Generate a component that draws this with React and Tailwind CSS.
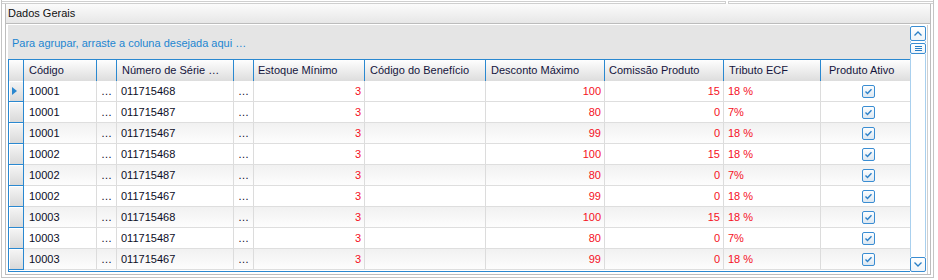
import React from 'react';

const rows = [
  ['10001', '011715468', '3', '100', '15', '18 %'],
  ['10001', '011715487', '3', '80', '0', '7%'],
  ['10001', '011715467', '3', '99', '0', '18 %'],
  ['10002', '011715468', '3', '100', '15', '18 %'],
  ['10002', '011715487', '3', '80', '0', '7%'],
  ['10002', '011715467', '3', '99', '0', '18 %'],
  ['10003', '011715468', '3', '100', '15', '18 %'],
  ['10003', '011715487', '3', '80', '0', '7%'],
  ['10003', '011715467', '3', '99', '0', '18 %'],
];

function CheckBox() {
  return (
    <svg width="13" height="13" viewBox="0 0 13 13">
      <defs>
        <linearGradient id="cbg" x1="0" y1="0" x2="0" y2="1">
          <stop offset="0" stopColor="#ffffff" />
          <stop offset="1" stopColor="#dbe6f0" />
        </linearGradient>
      </defs>
      <rect x="0.5" y="0.5" width="12" height="12" rx="1.5" fill="url(#cbg)" stroke="#3a8dd2" />
      <polyline points="3.5,6.5 5.5,8.5 9.5,4.2" fill="none" stroke="#2c80c8" strokeWidth="1.4" />
    </svg>
  );
}

function ScrollButton({ children, className }) {
  return (
    <div className={`flex items-center justify-center rounded-[2px] border border-[#3a8dd2] bg-gradient-to-b from-white to-[#eef4f9] ${className}`}>
      {children}
    </div>
  );
}

export default function App() {
  const headCell = 'flex items-center h-full border-r border-[#2a88d0] bg-gradient-to-b from-[#fefefe] to-[#dddddd] text-[#14143c]';
  const cell = 'flex items-center h-full border-r border-[#dcdcdc]';

  return (
    <div className="w-[938px] h-[280px] bg-white pl-[1px] overflow-hidden font-['Liberation_Sans',Arial,sans-serif] text-[11px] leading-none">
      <div className="w-[933px] h-[278px] border-l border-r border-b border-[#c4c4c4] flex flex-col">
        {/* top tab edges */}
        <div className="h-[4px] flex">
          <div className="w-[724px] mt-[1px] h-[3px] border-t border-b border-[#cfcfcf] border-r" />
          <div className="flex-1 mt-[1px] h-[3px] border-t border-b border-[#cfcfcf] border-l ml-[2px]" />
        </div>

        <div className="ml-[3px] w-[926px] h-[271px] border-l border-r border-b border-[#bdbdbd] flex flex-col">
          {/* panel caption */}
          <div className="h-[20px] border-b border-[#bcbcbc] bg-gradient-to-b from-[#fbfbfb] to-[#e7e7e7] flex items-center pl-[2px] text-[#111]">
            Dados Gerais
          </div>

          <div className="flex-1 flex pl-[2px] pt-[1px]">
            <div className="w-[902px] flex flex-col">
              {/* group panel */}
              <div className="h-[34px] bg-[#e5e5e5] flex items-center pl-[4px] pt-[3px] text-[#1d86d1]">
                Para agrupar, arraste a coluna desejada aqui …
              </div>

              {/* grid */}
              <div className="h-[213px] border-l border-b border-t border-[#2a88d0] flex flex-col overflow-hidden">
                <div className="h-[21px] flex shrink-0">
                  <div className={`${headCell} w-[15px]`} />
                  <div className={`${headCell} w-[73px] pl-[5px]`}>Código</div>
                  <div className={`${headCell} w-[20px]`} />
                  <div className={`${headCell} w-[117px] pl-[5px]`}>Número de Série …</div>
                  <div className={`${headCell} w-[20px]`} />
                  <div className={`${headCell} w-[111px] pl-[4px]`}>Estoque Mínimo</div>
                  <div className={`${headCell} w-[121px] pl-[5px]`}>Código do Benefício</div>
                  <div className={`${headCell} w-[119px] pl-[5px]`}>Desconto Máximo</div>
                  <div className={`${headCell} w-[119px] pl-[4px]`}>Comissão Produto</div>
                  <div className={`${headCell} w-[97px] pl-[5px]`}>Tributo ECF</div>
                  <div className={`${headCell} w-[89px] pl-[8px] border-r-0`}>Produto Ativo</div>
                </div>

                {rows.map((r, i) => (
                  <div
                    key={i}
                    className={`h-[21px] flex shrink-0 border-b border-[#dedede] text-[#0c0c26] ${
                      i % 2 === 0 && i > 0 ? 'bg-gradient-to-b from-[#f1f1f1] to-[#fdfdfd]' : 'bg-white'
                    }`}
                  >
                    <div className="w-[15px] h-[21px] -mb-[1px] border-r border-b border-[#2a88d0] bg-gradient-to-b from-[#f6f6f6] to-[#d9d9d9] flex items-center pl-[3px] shadow-[inset_1px_1px_0_#ffffff]">
                      {i === 0 && (
                        <svg width="5" height="8" viewBox="0 0 5 8">
                          <polygon points="0,0 5,4 0,8" fill="#2a87cf" />
                        </svg>
                      )}
                    </div>
                    <div className={`${cell} w-[73px] pl-[5px]`}>{r[0]}</div>
                    <div className={`${cell} w-[20px] justify-center`}>…</div>
                    <div className={`${cell} w-[117px] pl-[4px]`}>{r[1]}</div>
                    <div className={`${cell} w-[20px] justify-center`}>…</div>
                    <div className={`${cell} w-[111px] justify-end pr-[3px] text-[#f5101e]`}>{r[2]}</div>
                    <div className={`${cell} w-[121px]`} />
                    <div className={`${cell} w-[119px] justify-end pr-[3px] text-[#f5101e]`}>{r[3]}</div>
                    <div className={`${cell} w-[119px] justify-end pr-[3px] text-[#f5101e]`}>{r[4]}</div>
                    <div className={`${cell} w-[97px] pl-[4px] text-[#f5101e]`}>{r[5]}</div>
                    <div className="flex items-center justify-center h-full w-[89px] pl-[6px]">
                      <CheckBox />
                    </div>
                  </div>
                ))}
              </div>
            </div>

            {/* vertical scrollbar */}
            <div className="w-[16px] h-[246px] mt-[1px] flex flex-col">
              <ScrollButton className="h-[15px]">
                <svg width="8" height="5" viewBox="0 0 8 5">
                  <polyline points="0.5,4.5 4,1 7.5,4.5" fill="none" stroke="#2a7fc6" strokeWidth="1.3" />
                </svg>
              </ScrollButton>
              <div className="h-[2px] border-l border-r border-[#a9d0ee] bg-white" />
              <ScrollButton className="h-[11px]">
                <svg width="7" height="5" viewBox="0 0 7 5">
                  <path d="M0 0.5H7M0 2.5H7M0 4.5H7" stroke="#2a7fc6" strokeWidth="1" />
                </svg>
              </ScrollButton>
              <div className="flex-1 border-l border-r border-[#a9d0ee] bg-white" />
              <ScrollButton className="h-[15px]">
                <svg width="8" height="5" viewBox="0 0 8 5">
                  <polyline points="0.5,0.5 4,4 7.5,0.5" fill="none" stroke="#2a7fc6" strokeWidth="1.3" />
                </svg>
              </ScrollButton>
            </div>

            <div className="w-[1px] ml-[1px] bg-[#cfcfcf]" />
          </div>
        </div>
      </div>
    </div>
  );
}
